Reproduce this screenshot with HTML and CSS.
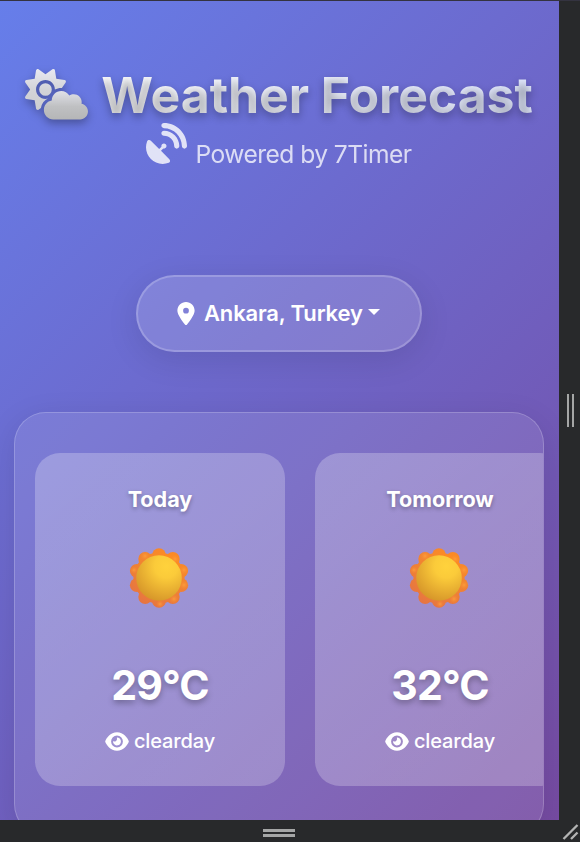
FILE: index.html
```html
<!DOCTYPE html>
<html lang="en">
<head>
<meta charset="utf-8">
<title>Weather Forecast</title>
<link rel="stylesheet" href="styles.css">
</head>
<body>
<svg class="defs" width="0" height="0" aria-hidden="true">
  <defs>
    <linearGradient id="cloud" x1="0" y1="0" x2="0" y2="1"><stop offset="0" stop-color="#e0e1e8"/><stop offset=".55" stop-color="#bfc0c2"/><stop offset="1" stop-color="#b5b6b7"/></linearGradient>
    <linearGradient id="star" x1="0" y1="0" x2="0" y2="1"><stop offset="0" stop-color="#e8e9f1"/><stop offset=".5" stop-color="#d3d4d8"/><stop offset="1" stop-color="#cccdd0"/></linearGradient>
    <radialGradient id="rays" gradientUnits="userSpaceOnUse" cx="10" cy="-18" r="52"><stop offset="0" stop-color="#ff8c20"/><stop offset=".55" stop-color="#f18432"/><stop offset="1" stop-color="#e57343"/></radialGradient>
    <radialGradient id="disc" cx=".66" cy=".24" r=".85"><stop offset="0" stop-color="#ffd23c"/><stop offset=".3" stop-color="#fbcb3a"/><stop offset="1" stop-color="#d39128"/></radialGradient>
    <radialGradient id="bump"><stop offset="0" stop-color="#ffa13e" stop-opacity=".8"/><stop offset="1" stop-color="#f58a2c" stop-opacity="0"/></radialGradient>
    <symbol id="eye" viewBox="0 0 576 512"><path d="M288 32c-80.8 0-145.5 36.8-192.6 80.6C48.6 156 17.3 208 2.5 243.7c-3.3 7.9-3.3 16.7 0 24.6C17.3 304 48.6 356 95.4 399.4C142.5 443.2 207.2 480 288 480s145.5-36.8 192.6-80.6c46.8-43.5 78.1-95.4 93-131.1c3.3-7.9 3.3-16.7 0-24.6c-14.9-35.7-46.2-87.7-93-131.1C433.5 68.8 368.8 32 288 32zM144 256a144 144 0 1 1 288 0 144 144 0 1 1 -288 0zm144-64c0 35.3-28.7 64-64 64c-7.1 0-13.9-1.2-20.3-3.3c-5.5-1.8-11.9 1.6-11.7 7.4c.3 6.9 1.3 13.8 3.2 20.7c13.7 51.2 66.4 81.6 117.6 67.9s81.6-66.4 67.9-117.6c-11.1-41.5-47.8-69.4-88.6-71.1c-5.8-.2-9.2 6.1-7.4 11.7c2.1 6.4 3.3 13.2 3.3 20.3z"/></symbol>
    <symbol id="sun" viewBox="-30 -30 60 60">
      <g fill="url(#rays)"><circle r="25.600"/><circle cx="0" cy="-22.900" r="6.900"/><circle cx="13.800" cy="-19" r="6.900"/><circle cx="22.200" cy="-7.200" r="6.900"/><circle cx="22.200" cy="7.200" r="6.900"/><circle cx="13.800" cy="19" r="6.900"/><circle cx="0" cy="22.900" r="6.900"/><circle cx="-13.800" cy="19" r="6.900"/><circle cx="-22.200" cy="7.200" r="6.900"/><circle cx="-22.200" cy="-7.200" r="6.900"/><circle cx="-13.800" cy="-19" r="6.900"/></g>
      <g fill="url(#bump)"><circle cx="-14" cy="-22" r="5"/><circle cx="16" cy="-19" r="5"/><circle cx="25" cy="-8" r="5"/><circle cx="25" cy="7" r="5"/><circle cx="15" cy="21" r="5"/><circle cx="1" cy="26" r="4"/><circle cx="-25" cy="-8" r="4"/></g>
      <circle r="22.800" fill="url(#disc)"/>
    </symbol>
  </defs>
</svg>
<div class="device">
  <main class="page">
    <header class="header">
      <h1 class="title">
        <svg class="title-icon" viewBox="0 0 640 512"><path fill="url(#star)" d="M294.2 1.2c5.1 2.1 8.7 6.7 9.6 12.1l14.1 84.7 84.7 14.1c5.4 .9 10 4.5 12.1 9.6s1.5 10.9-1.6 15.4l-38.5 55c-2.2-.1-4.4-.2-6.7-.2c-23.3 0-45.1 6.2-64 17.1l0-1.1c0-53-43-96-96-96s-96 43-96 96s43 96 96 96c8.1 0 15.9-1 23.4-2.9c-36.6 18.1-63.3 53.1-69.8 94.9l-24.4 17c-4.5 3.2-10.3 3.8-15.4 1.6s-8.7-6.7-9.6-12.1L98.1 317.9 13.4 303.8c-5.4-.9-10-4.5-12.1-9.6s-1.5-10.9 1.6-15.4L52.5 208 2.9 137.2c-3.2-4.5-3.8-10.3-1.6-15.4s6.7-8.7 12.1-9.6L98.1 98.1l14.1-84.7c.9-5.4 4.5-10 9.6-12.1s10.9-1.5 15.4 1.6L208 52.5 278.8 2.9c4.5-3.2 10.3-3.8 15.4-1.6zM144 208a64 64 0 1 1 128 0 64 64 0 1 1 -128 0z"/><path fill="url(#cloud)" d="M639.9 431.9c0 44.2-35.8 80-80 80l-271.9 0c-53 0-96-43-96-96c0-47.6 34.6-87 80-94.6l0-1.3c0-53 43-96 96-96c34.9 0 65.4 18.6 82.2 46.4c13-9.1 28.8-14.4 45.8-14.4c44.2 0 80 35.8 80 80c0 5.9-.6 11.7-1.9 17.2c37.4 6.7 65.8 39.4 65.8 78.7z"/></svg>
        <span class="title-text">Weather Forecast</span>
      </h1>
      <p class="subtitle">
        <svg class="dish" viewBox="0 0 512 512"><path d="M192 32c0-17.700 14.300-32 32-32C383.100 0 512 128.900 512 288c0 17.700-14.300 32-32 32s-32-14.300-32-32C448 164.300 347.700 64 224 64c-17.700 0-32-14.300-32-32zM60.600 220.600L164.700 324.700l28.400-28.400c-.7-2.600-1.100-5.400-1.100-8.300c0-17.700 14.300-32 32-32s32 14.300 32 32s-14.300 32-32 32c-2.900 0-5.600-.4-8.300-1.100l-28.400 28.400L291.400 451.400c14.500 14.500 11.800 38.800-7.300 46.300C260.500 506.900 234.900 512 208 512C93.100 512 0 418.900 0 304c0-26.900 5.100-52.500 14.400-76.100c7.500-19 31.800-21.800 46.300-7.300zM224 96c106 0 192 86 192 192c0 17.700-14.300 32-32 32s-32-14.300-32-32c0-70.700-57.300-128-128-128c-17.700 0-32-14.300-32-32s14.300-32 32-32z"/></svg>
        <span class="subtitle-text">Powered by 7Timer</span>
      </p>
    </header>
    <button class="location">
      <svg class="pin" viewBox="0 0 384 512"><path d="M215.700 499.200C267 435 384 279.400 384 192C384 86 298 0 192 0S0 86 0 192c0 87.400 117 243 168.300 307.200c12.300 15.300 35.100 15.300 47.400 0zM192 128a64 64 0 1 1 0 128 64 64 0 1 1 0-128z"/></svg>
      <span>Ankara, Turkey</span>
      <i class="caret"></i>
    </button>
    <section class="forecast">
      <article class="card">
        <h2 class="day">Today</h2>
        <svg class="sun"><use href="#sun"/></svg>
        <div class="temp">29°C</div>
        <div class="condition"><svg class="eye"><use href="#eye"/></svg><span>clearday</span></div>
      </article>
      <article class="card">
        <h2 class="day">Tomorrow</h2>
        <svg class="sun"><use href="#sun"/></svg>
        <div class="temp">32°C</div>
        <div class="condition"><svg class="eye"><use href="#eye"/></svg><span>clearday</span></div>
      </article>
    </section>
  </main>
  <div class="rail rail-right"><i class="grip grip-v"></i></div>
  <div class="rail rail-bottom"><i class="grip grip-h"></i></div>
  <div class="rail corner"><svg width="21" height="22" viewBox="0 0 21 22"><path d="M4.500 19L18.500 5M12 19L18.500 12.500"/></svg></div>
</div>
</body>
</html>
```
FILE: styles.css
```css
* { box-sizing: border-box; }
body {
  margin: 0;
  overflow: hidden;
  background: #28292b;
  font-family: Inter, "Liberation Sans", sans-serif;
  color: #fff;
}
.defs { position: absolute; }
.device {
  display: grid;
  grid-template: 819px 22px / 559px 21px;
  width: 580px;
  height: 842px;
  border-top: 1px solid #343340;
}
.page {
  display: flex;
  flex-direction: column;
  align-items: center;
  height: 819px;
  padding-right: 1px;
  overflow: hidden;
  background: linear-gradient(135deg, #667eea 0%, #764ba2 100%);
}
.header {
  flex: none;
  width: 100%;
  height: 274px;
  padding-top: 64px;
}
.title {
  display: flex;
  justify-content: center;
  gap: 13px;
  height: 60px;
  margin: 0;
  font-size: 50px;
  font-weight: 700;
  letter-spacing: -.1px;
  line-height: 61px;
  white-space: nowrap;
}
.title-icon {
  width: 63px;
  height: 50.4px;
  margin-top: 4px;
  overflow: visible;
  filter: drop-shadow(0 4px 4px rgba(0, 0, 0, .3));
}
.title-text {
  color: transparent;
  background: linear-gradient(45deg, #fff, #e0e7ff);
  -webkit-background-clip: text;
  background-clip: text;
  text-shadow: 0 4px 8px rgba(0, 0, 0, .3);
}
.subtitle {
  display: flex;
  justify-content: center;
  gap: 9px;
  margin: -2px 1px 0 0;
  font-size: 24.6px;
  font-weight: 400;
  letter-spacing: -.55px;
  opacity: .8;
}
.dish { width: 41px; height: 41px; fill: #fff; }
.subtitle-text { line-height: 30px; margin-top: 16px; opacity: .95; }
.location {
  display: flex;
  align-items: center;
  flex: none;
  width: 286px;
  height: 77px;
  padding: 0 38px 0 39px;
  border: 2px solid rgba(255, 255, 255, .2);
  border-radius: 39px;
  background: rgba(255, 255, 255, .15);
  box-shadow: 0 8px 32px rgba(0, 0, 0, .1);
  color: #fff;
  font: 600 22px Inter, "Liberation Sans", sans-serif;
  letter-spacing: -.16px;
  white-space: nowrap;
}
.location span { margin-top: -2px; }
.pin { width: 18px; height: 23px; margin: -1px 9px 0 0; fill: #fff; }
.caret {
  margin: -3px 0 0 5px;
  border: 6px solid transparent;
  border-top-color: #fff;
  border-bottom: 0;
}
.forecast {
  display: flex;
  flex: none;
  gap: 30px;
  width: 530px;
  height: 424px;
  margin-top: 60px;
  padding: 40px 20px;
  border: 1px solid rgba(255, 255, 255, .2);
  border-radius: 32px;
  background: rgba(255, 255, 255, .1);
  box-shadow: 0 8px 32px rgba(0, 0, 0, .1);
  overflow: hidden;
}
.card {
  display: flex;
  flex-direction: column;
  align-items: center;
  flex: none;
  width: 250px;
  height: 333px;
  padding-top: 32px;
  border-radius: 25px;
  background: linear-gradient(145deg, rgba(255, 255, 255, .25), rgba(255, 255, 255, .23));
}
.day {
  margin: 0;
  font-size: 21.6px;
  font-weight: 700;
  line-height: 28px;
  text-shadow: 0 2px 4px rgba(0, 0, 0, .3);
}
.sun { width: 60px; height: 60px; margin: 35px 2px 0 0; }
.temp {
  margin-top: 52px;
  font-size: 41px;
  font-weight: 700;
  letter-spacing: -.8px;
  line-height: 51px;
  text-shadow: 0 3px 6px rgba(0, 0, 0, .3);
}
.condition {
  display: flex;
  align-items: center;
  gap: 5px;
  margin-top: 17px;
  font-size: 20px;
  font-weight: 450;
  letter-spacing: -.12px;
  line-height: 26px;
}
.eye { width: 24px; height: 21px; fill: #fff; }
.rail { display: flex; align-items: center; justify-content: center; background: #28292b; }
.grip-v {
  width: 7px;
  height: 33px;
  margin-left: 2px;
  border: solid #a5a6a6;
  border-width: 0 2px;
}
.grip-h {
  width: 32px;
  height: 8px;
  margin: 3px 1px 0 0;
  border: solid #a5a6a6;
  border-width: 3px 0;
}
.corner path { fill: none; stroke: #b4b4b4; stroke-width: 2.3; }
```
